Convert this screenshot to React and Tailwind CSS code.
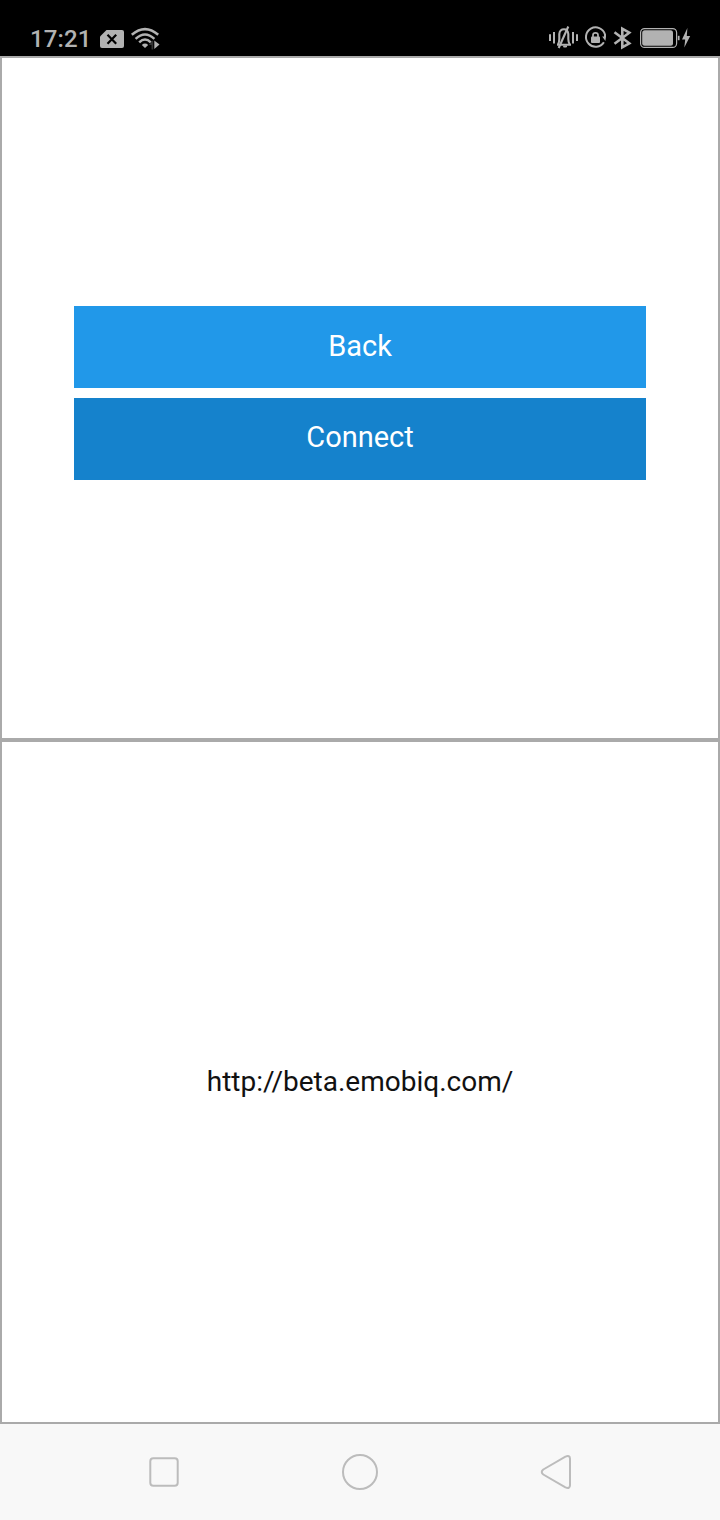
function StatusBar() {
  return (
    <header className="flex h-14 items-end justify-between bg-black pl-[30px] pr-[28px]">
      <div className="flex h-9 items-center">
        <span className="w-[70px] pt-[1px] text-[24px] leading-9 font-medium tracking-[0.1px] text-[#b2b2b2]">17:21</span>
        <svg className="h-9 w-[62px]" viewBox="100 20 62 36" fill="none">
          <path d="M106.5 30H122Q124 30 124 32V46Q124 48 122 48H102Q100 48 100 46V36.5Z" fill="#b2b2b2" />
          <path d="M107.5 34.7L116.2 43.7M116.2 34.7L107.5 43.7" stroke="#000" strokeWidth="2.2" />
          <g stroke="#b2b2b2" strokeWidth="2.5">
            <path d="M131.8 34.8Q145 23.4 158.2 34.8" />
            <path d="M135.6 38.8Q145 30.2 154.4 38.8" />
            <path d="M139.2 42.3Q145 36.8 150.8 42.3" />
          </g>
          <path d="M141.8 44.9Q145 42.2 148.2 44.9L145 48Z" fill="#b2b2b2" />
          <path d="M148.8 45L153.2 40V49.5H151.5V45Z" fill="#333" />
          <path d="M154.3 40.5L159.5 44.5L154.3 49Z" fill="#b2b2b2" />
        </svg>
      </div>
      <svg className="h-9 w-[144px]" viewBox="548 20 144 36" fill="none" stroke="#b2b2b2" strokeWidth="2">
        <path d="M550 34.3V41M554 32V43.5M573 32V43.5M577 34.3V41" />
        <path d="M557 44.8H571M558 44.5Q559.3 42 559.3 39V34Q559.8 29.3 564 29.3Q567.8 29.3 568.3 34V39Q568.3 42 569.8 44.5" strokeWidth="2.1" />
        <path d="M568.3 26.5L558.7 48" strokeWidth="2.1" />
        <path d="M563.5 45.5H567V47Q565 48 563 47Z" fill="#b2b2b2" stroke="none" />
        <path d="M603.9 42.2A9.7 9.7 0 1 1 605 34.4V37.2" />
        <path d="M602.2 36.5L605.4 41L606 36.5Z" fill="#b2b2b2" stroke="none" />
        <rect x="591" y="36.5" width="9" height="6.5" rx="1" fill="#b2b2b2" stroke="none" />
        <path d="M593 37V35Q593 32.8 595.5 32.8Q598 32.8 598 35V37" strokeWidth="1.7" />
        <path d="M614.5 32.3L629.3 43.3L622.3 47.3V28.7L629.3 32.7L614.5 43.7" strokeWidth="2.6" />
        <rect x="640.6" y="28.6" width="36" height="18.8" rx="4" strokeWidth="1.2" />
        <rect x="642.2" y="30.2" width="30.8" height="15.6" rx="2.5" fill="#b2b2b2" stroke="none" />
        <path d="M678.7 35.8V40.2" strokeWidth="1.7" />
        <path d="M687.4 28L682 39.5H685.2L684.3 47.5L690.2 36H686.8Z" fill="#b2b2b2" stroke="none" />
      </svg>
    </header>
  );
}

function NavigationBar() {
  return (
    <nav className="flex h-24 items-center justify-between bg-[#f8f8f8] px-36">
      <svg className="size-10" viewBox="0 0 40 40" fill="none" stroke="#bcbcbc" strokeWidth="2">
        <rect x="6.3" y="6.3" width="27.4" height="27.4" rx="3" />
      </svg>
      <svg className="size-10" viewBox="0 0 40 40" fill="none" stroke="#bcbcbc" strokeWidth="2">
        <circle cx="20" cy="20" r="17" />
      </svg>
      <svg className="size-10" viewBox="0 0 40 40" fill="none" stroke="#bcbcbc" strokeWidth="2">
        <path d="M7.3 17.5L29.4 4.6Q34 2.8 34 6.8V33.2Q34 37.2 29.4 35.4L7.3 22.5Q4.2 20 7.3 17.5Z" />
      </svg>
    </nav>
  );
}

export default function App() {
  return (
    <div className="flex h-[1520px] w-[720px] flex-col bg-white font-['Roboto',sans-serif]">
      <StatusBar />
      <main className="grid flex-1 grid-rows-2">
        <section className="flex flex-col justify-center gap-2.5 border-2 border-[#aaaaaa] px-[72px] pb-2.5">
          <button className="flex h-[82px] items-center justify-center bg-[#2198e9] pb-[2px] text-[29px] leading-[34px] text-white">Back</button>
          <button className="flex h-[82px] items-center justify-center bg-[#1582cc] pb-[4px] text-[29px] leading-[34px] text-white">Connect</button>
        </section>
        <section className="flex items-center justify-center border-2 border-[#aaaaaa]">
          <p className="text-[28px] leading-8 text-[#111]">http://beta.emobiq.com/</p>
        </section>
      </main>
      <NavigationBar />
    </div>
  );
}
